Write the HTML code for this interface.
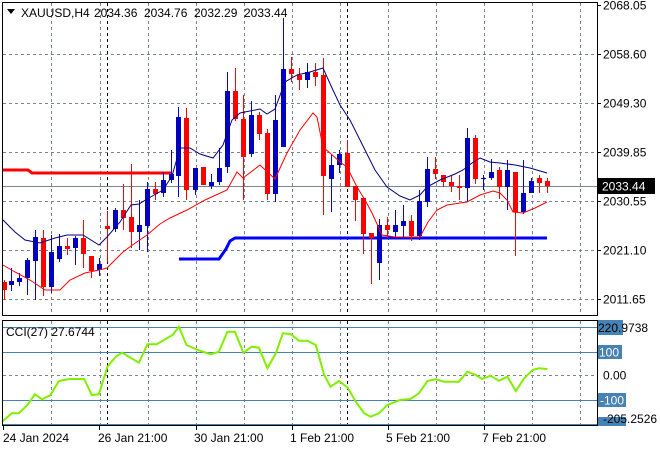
<!DOCTYPE html>
<html><head><meta charset="utf-8"><style>
html,body{margin:0;padding:0;background:#fff;width:660px;height:450px;overflow:hidden}
svg{display:block}
text{font-family:"Liberation Sans",sans-serif;font-size:12px;fill:#000}
</style></head><body>
<svg id="s" width="660" height="450" xmlns="http://www.w3.org/2000/svg">
<rect x="0" y="0" width="660" height="450" fill="#fff"/>
<g id="grid" stroke="#7a8590" stroke-width="1" stroke-dasharray="3,3" fill="none"></g>
<g id="c"></g>
<rect x="2.5" y="2.5" width="595" height="313" fill="none" stroke="#000"/>
<rect x="2.5" y="320.5" width="595" height="105" fill="none" stroke="#000"/>
<g id="ax"></g>
</svg>
<script>
var NS="http://www.w3.org/2000/svg";
function el(p,t,a,tx){var e=document.createElementNS(NS,t);for(var k in a)e.setAttribute(k,a[k]);if(tx!==undefined)e.textContent=tx;document.getElementById(p).appendChild(e);return e;}
var vx=[51,99.5,148,196,244,292,340,388,436,484,532,580];
vx.forEach(function(x){x=Math.round(x)+.5;el("grid","line",{x1:x,y1:3,x2:x,y2:315});el("grid","line",{x1:x,y1:321,x2:x,y2:425});});
[54,103,152,201,250,299].forEach(function(y){el("grid","line",{x1:3,y1:y+.5,x2:597,y2:y+.5});});
el("grid","line",{x1:3,y1:375.5,x2:597,y2:375.5});
[107.5,347.5].forEach(function(x){el("grid","line",{x1:x,y1:3,x2:x,y2:315,stroke:"#000"});el("grid","line",{x1:x,y1:321,x2:x,y2:425,stroke:"#000"});});
[327,352,400,424].forEach(function(y){el("c","line",{x1:3,y1:y+.5,x2:597,y2:y+.5,stroke:"#4682b4"});});
el("c","line",{x1:3,y1:186.5,x2:597,y2:186.5,stroke:"#7a8590"});
el("c","polyline",{points:"3,170 28,170 32,173 171,173",stroke:"#f00","stroke-width":3,fill:"none"});
el("c","polyline",{points:"179,259 219,259 226,249 230,241 235,238 547,238",stroke:"#00f","stroke-width":3,fill:"none"});
var C=[[4,280,300,282,290,'r'],[11,268,291,281,285,'b'],[19,273,286,278,282,'b'],[27,258,295,260,278,'b'],[35,230,300,237,261,'b'],[43,230,296,238,287,'r'],[51,235,293,252,287,'b'],[59,234,262,246,259,'b'],[67,238,255,246,249,'r'],[75,236,265,238,248,'b'],[83,220,268,238,254,'r'],[91,256,278,256,271,'r'],[99,258,276,264,270,'b'],[107,211,262,226,229,'r'],[115,208,232,210,229,'b'],[123,184,230,210,218,'r'],[131,164,248,217,232,'r'],[139,200,250,225,232,'b'],[147,182,252,189,226,'b'],[155,182,200,189,194,'r'],[163,172,197,180,193,'b'],[171,150,183,174,180,'b'],[178,107,197,117,176,'b'],[186,108,200,118,190,'r'],[195,168,195,168,190,'b'],[203,167,185,167,185,'r'],[211,174,189,182,186,'b'],[219,148,185,168,182,'b'],[227,72,173,91,167,'b'],[235,68,121,91,119,'r'],[243,95,200,119,157,'r'],[251,101,157,115,154,'b'],[259,112,140,115,134,'r'],[267,129,200,133,194,'r'],[275,95,202,120,194,'b'],[283,18,147,69,147,'b'],[291,57,82,69,74,'r'],[299,68,90,75,80,'r'],[307,63,88,72,80,'b'],[315,63,86,72,77,'r'],[323,58,215,75,176,'r'],[331,155,212,165,179,'b'],[339,150,173,154,165,'b'],[347,140,187,153,187,'r'],[355,186,221,186,200,'r'],[363,198,254,198,234,'r'],[371,233,284,233,238,'r'],[379,219,280,225,263,'b'],[387,217,238,225,230,'r'],[395,210,238,225,232,'b'],[403,205,237,221,226,'b'],[411,215,241,221,236,'r'],[419,190,240,201,236,'b'],[427,157,207,169,202,'b'],[435,157,179,169,174,'r'],[443,175,187,175,182,'r'],[451,175,192,182,186,'r'],[459,175,200,186,188,'r'],[467,128,202,138,188,'b'],[475,135,184,138,179,'r'],[483,175,190,178,179,'b'],[491,159,180,172,178,'b'],[499,167,199,170,187,'r'],[507,160,210,170,187,'b'],[515,172,256,172,212,'r'],[523,160,214,193,212,'b'],[531,178,193,181,193,'b'],[539,175,193,178,183,'r'],[547,178,193,181,186,'r']];
C.forEach(function(c){var col=c[5]=='b'?'#0000c0':'#ff0000';var wc=c[5]=='b'?'#0000ff':'#ff0000';
el("c","line",{x1:c[0]+.5,y1:c[1],x2:c[0]+.5,y2:c[2],stroke:wc});
el("c","rect",{x:c[0]-2,y:c[3],width:5,height:Math.max(1,c[4]-c[3]),fill:col});});
el("c","polyline",{points:"3,220 15,232 25,240 40,243 55,238 67,235 83,235 99,245 107,237 120,222 131,205 139,204 147,199 163,190 172,176 180,148 190,148 200,154 213,158 223,145 232,120 240,113 260,109 267,114 275,109 285,82 297,75 310,72 323,68 332,88 340,105 350,120 360,140 375,170 387,187 400,196 410,200 420,195 427,187 440,180 455,174 463,170 472,163 480,158 490,162 500,163 515,165 530,168 547,173",stroke:"#000080","stroke-width":1,fill:"none"});
el("c","polyline",{points:"3,265 15,272 30,280 45,290 60,290 70,280 85,273 99,270 107,268 123,252 131,246 147,235 160,224 170,218 187,210 205,200 227,190 237,172 243,178 260,165 275,179 287,153 300,130 313,113 317,117 323,147 330,153 340,162 347,167 357,187 365,200 372,213 382,235 395,237 410,237 420,237 428,222 437,210 447,205 467,202 480,195 493,191 500,193 507,200 513,212 523,213 535,208 547,202",stroke:"#ff0000","stroke-width":1,fill:"none"});
var cc=[[5,365],[28,340],[45,340],[65,315],[83,283],[100,298],[120,285],[140,243],[165,237],[200,237],[218,285],[235,283],[255,200],[275,170],[290,158],[330,188],[350,133],[372,133],[410,105],[425,80],[443,135],[470,150],[500,163],[520,155],[540,95],[558,95],[578,158],[598,140],[615,143],[635,205],[655,160],[672,100],[690,102],[710,122],[730,122],[750,135],[770,225],[785,260],[805,243],[825,262],[845,305],[865,340],[880,350],[900,340],[920,315],[950,300],[975,297],[995,280],[1015,243],[1035,238],[1055,245],[1090,245],[1110,215],[1130,225],[1145,237],[1165,227],[1185,242],[1205,230],[1225,273],[1245,235],[1265,210],[1280,205],[1300,207]];
el("c","polyline",{points:cc.map(function(p){return (p[0]/2.375).toFixed(1)+","+(p[1]/3+300).toFixed(1)}).join(" "),stroke:"#80f000","stroke-width":2,fill:"none"});
[["2068.05",5],["2058.60",54],["2049.30",103],["2039.85",152],["2030.55",201],["2021.10",250],["2011.65",299]].forEach(function(l){
el("ax","line",{x1:597,y1:l[1]+.5,x2:601,y2:l[1]+.5,stroke:"#000"});
el("ax","text",{x:603,y:l[1]+4.5},l[0]);});
el("ax","rect",{x:597,y:178,width:58,height:16,fill:"#000"});
el("ax","text",{x:602,y:190.5,style:"fill:#fff"},"2033.44");
el("ax","rect",{x:598,y:320,width:25,height:15,fill:"#4682b4"});
el("ax","text",{x:598,y:332},"220.9738");
el("ax","rect",{x:598,y:345,width:24,height:14,fill:"#4682b4"});
el("ax","text",{x:599,y:356.5,style:"fill:#fff"},"100");
el("ax","text",{x:603,y:379.5},"0.00");
el("ax","rect",{x:598,y:393,width:28,height:14,fill:"#4682b4"});
el("ax","text",{x:600,y:404.5,style:"fill:#fff"},"-100");
el("ax","rect",{x:598,y:417,width:28,height:9,fill:"#4682b4"});
el("ax","text",{x:603,y:423},"-205.2526");
[["24 Jan 2024",3,3],["26 Jan 21:00",98,99],["30 Jan 21:00",194,196],["1 Feb 21:00",290,292],["5 Feb 21:00",386,388],["7 Feb 21:00",482,484]].forEach(function(t){
el("ax","line",{x1:t[2]+.5,y1:425,x2:t[2]+.5,y2:430,stroke:"#000"});
el("ax","text",{x:t[1],y:442},t[0]);});
el("ax","polygon",{points:"7,9 15,9 11,14",fill:"#000"});
el("ax","text",{x:21,y:17},"XAUUSD,H4");
el("ax","text",{x:94,y:17},"2034.36");
el("ax","text",{x:144,y:17},"2034.76");
el("ax","text",{x:194,y:17},"2032.29");
el("ax","text",{x:244,y:17},"2033.44");
el("ax","text",{x:6,y:336},"CCI(27) 27.6744");
</script>
</body></html>
